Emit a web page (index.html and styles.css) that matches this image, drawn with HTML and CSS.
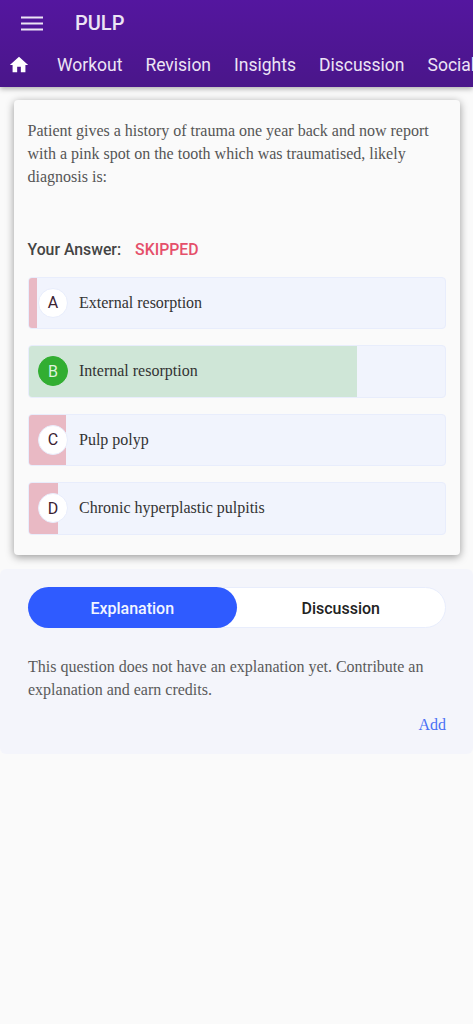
FILE: index.html
```html
<!DOCTYPE html>
<html lang="en">
<head>
<meta charset="utf-8">
<title>PULP</title>
<link rel="stylesheet" href="styles.css">
</head>
<body>
<header class="appbar">
  <div class="toolbar">
    <svg class="menu" viewBox="0 0 22 15" width="22" height="15"><path d="M0 1.5h22M0 7.5h22M0 13.5h22" stroke="#ece4f5" stroke-width="2" fill="none"/></svg>
    <span class="title">PULP</span>
  </div>
  <nav class="tabs">
    <svg class="home" viewBox="0 0 24 24" width="22" height="22"><path d="M10 20v-6h4v6h5v-8h3L12 3 2 12h3v8z" fill="#fff"/></svg>
    <a>Workout</a><a>Revision</a><a>Insights</a><a>Discussion</a><a>Social</a>
  </nav>
</header>
<main>
  <section class="card">
    <p class="question">Patient gives a history of trauma one year back and now report with a pink spot on the tooth which was traumatised, likely diagnosis is:</p>
    <div class="answer"><span class="answer-label">Your Answer:</span><span class="skipped">SKIPPED</span></div>
    <div class="options">
      <div class="option"><div class="fill wrong" style="width:2.3%"></div><span class="badge">A</span><span class="text">External resorption</span></div>
      <div class="option"><div class="fill right" style="width:79.2%"></div><span class="badge correct">B</span><span class="text">Internal resorption</span></div>
      <div class="option"><div class="fill wrong" style="width:9.3%"></div><span class="badge">C</span><span class="text">Pulp polyp</span></div>
      <div class="option"><div class="fill wrong" style="width:7.3%"></div><span class="badge">D</span><span class="text">Chronic hyperplastic pulpitis</span></div>
    </div>
  </section>
  <section class="explain">
    <div class="switch">
      <span class="seg active">Explanation</span>
      <span class="seg">Discussion</span>
    </div>
    <p class="note">This question does not have an explanation yet. Contribute an explanation and earn credits.</p>
    <div class="add-row"><a class="add">Add</a></div>
  </section>
</main>
</body>
</html>
```

FILE: styles.css
```css
* { box-sizing: border-box; }
html, body { margin: 0; padding: 0; }
body {
  background: #fafafa;
  height: 1024px;
  overflow: hidden;
  font-family: "Liberation Serif", serif;
}
.appbar {
  height: 87px;
  background: linear-gradient(180deg, #54169f 0%, #4a168a 100%);
  box-shadow: 0 2px 5px rgba(0,0,0,.3);
  overflow: hidden;
  position: relative;
}
.toolbar {
  height: 46px;
  display: flex;
  align-items: center;
  padding-left: 21px;
}
.title {
  margin-left: 32px;
  font: 500 20px Roboto, sans-serif;
  color: #ece4f5;
}
.tabs {
  height: 37px;
  display: flex;
  align-items: center;
  padding-left: 8px;
  white-space: nowrap;
  font: 400 17.5px Roboto, sans-serif;
  color: #ece4f5;
}
.home { flex: none; margin-right: 27px; }
.tabs a { margin-right: 23px; flex: none; }
.card {
  margin: 13px 13px 0 13.5px;
  height: 455px;
  background: #fafafa;
  border-radius: 4px;
  box-shadow: 0 2px 8px rgba(0,0,0,.4);
  padding: 19px 14px 0;
}
.question {
  margin: 0;
  font-size: 16px;
  line-height: 23px;
  color: #555;
}
.answer {
  margin-top: 51px;
  display: flex;
  font: 500 15.8px/22px Roboto, sans-serif;
}
.answer-label { color: #444; }
.skipped { margin-left: 14px; color: #e5506a; }
.options {
  margin-top: 15.7px;
  display: flex;
  flex-direction: column;
  gap: 16.1px;
}
.option {
  position: relative;
  height: 52.4px;
  background: #f1f4fd;
  border: 1px solid #e8edfc;
  border-radius: 4px;
  display: flex;
  align-items: center;
  padding-left: 9.5px;
  overflow: hidden;
}
.fill { position: absolute; left: -1px; top: 0; bottom: 0; }
.wrong { background: #e9b9c4; }
.right { background: #cfe6d7; }
.badge {
  position: relative;
  width: 30px;
  height: 30px;
  border-radius: 50%;
  background: #fff;
  border: 1px solid #e8edfc;
  display: flex;
  align-items: center;
  justify-content: center;
  font: 400 16px Roboto, sans-serif;
  color: #3a2230;
  flex: none;
}
.badge.correct { background: #32ae32; border-color: #32ae32; color: #def3de; }
.text {
  position: relative;
  margin-left: 11px;
  font-size: 16px;
  color: #333;
}
.explain {
  margin-top: 14px;
  height: 185px;
  background: #f4f5fb;
  border-radius: 6px;
  padding: 18px 27px 0 28px;
}
.switch {
  display: flex;
  height: 41px;
  background: #fff;
  border: 1px solid #e8edfc;
  border-radius: 21px;
}
.seg {
  flex: 1;
  display: flex;
  align-items: center;
  justify-content: center;
  padding-top: 1px;
  font: 500 16px Roboto, sans-serif;
  color: #222;
  border-radius: 21px;
}
.seg.active { background: #2f5bff; color: #f2f5ff; margin: -1px 0 -1px -1px; }
.note {
  margin: 27px 0 0;
  font-size: 16px;
  line-height: 23px;
  color: #5a5a5a;
}
.add-row { margin-top: 15px; display: flex; justify-content: flex-end; }
.add { font-size: 16px; color: #4a70f5; }
```
